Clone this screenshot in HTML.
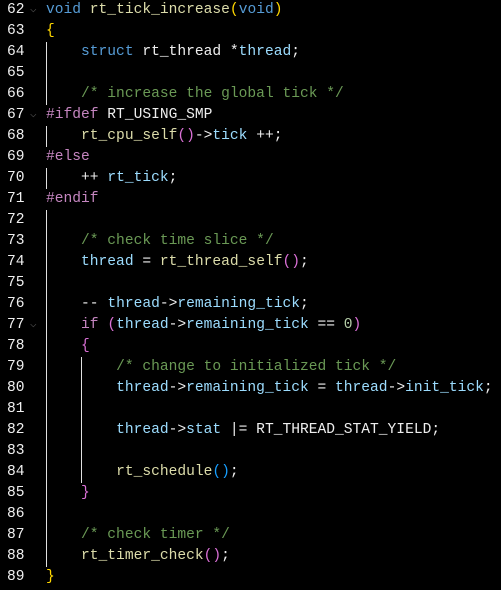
<!DOCTYPE html>
<html><head><meta charset="utf-8"><style>
body{margin:0;background:#000;width:501px;height:590px;overflow:hidden;font-family:"Liberation Mono",monospace;font-size:14.6px;}
.l{position:relative;height:21px;line-height:21px;white-space:pre;}
.n{position:absolute;left:7px;color:#f0f0f0;}
.c{position:absolute;left:46px;color:#eeeeee;}
.k{color:#569cd6}.v{color:#9cdcfe}.f{color:#dcdcaa}.g{color:#6a9955}.p{color:#c586c0}
.y{color:#ffd700}.m{color:#da70d6}.b{color:#179fff}
.fold{position:absolute;left:30px;top:0;color:#555;font-size:11px;}
.gd{position:absolute;width:1px;background:#e0e0e0;}
</style></head><body>
<div class="gd" style="left:46px;top:42px;height:63px"></div>
<div class="gd" style="left:46px;top:126px;height:21px"></div>
<div class="gd" style="left:46px;top:168px;height:21px"></div>
<div class="gd" style="left:46px;top:210px;height:357px"></div>
<div class="gd" style="left:81px;top:357px;height:126px"></div>
<div class="l"><span class="n">62</span><span class="fold">⌵</span><span class="c"><span class="k">void</span> <span class="f">rt_tick_increase</span><span class="y">(</span><span class="k">void</span><span class="y">)</span></span></div>
<div class="l"><span class="n">63</span><span class="c"><span class="y">{</span></span></div>
<div class="l"><span class="n">64</span><span class="c">    <span class="k">struct</span> rt_thread *<span class="v">thread</span>;</span></div>
<div class="l"><span class="n">65</span></div>
<div class="l"><span class="n">66</span><span class="c">    <span class="g">/* increase the global tick */</span></span></div>
<div class="l"><span class="n">67</span><span class="fold">⌵</span><span class="c"><span class="p">#ifdef</span> RT_USING_SMP</span></div>
<div class="l"><span class="n">68</span><span class="c">    <span class="f">rt_cpu_self</span><span class="m">()</span>-&gt;<span class="v">tick</span> ++;</span></div>
<div class="l"><span class="n">69</span><span class="c"><span class="p">#else</span></span></div>
<div class="l"><span class="n">70</span><span class="c">    ++ <span class="v">rt_tick</span>;</span></div>
<div class="l"><span class="n">71</span><span class="c"><span class="p">#endif</span></span></div>
<div class="l"><span class="n">72</span></div>
<div class="l"><span class="n">73</span><span class="c">    <span class="g">/* check time slice */</span></span></div>
<div class="l"><span class="n">74</span><span class="c">    <span class="v">thread</span> = <span class="f">rt_thread_self</span><span class="m">()</span>;</span></div>
<div class="l"><span class="n">75</span></div>
<div class="l"><span class="n">76</span><span class="c">    -- <span class="v">thread</span>-&gt;<span class="v">remaining_tick</span>;</span></div>
<div class="l"><span class="n">77</span><span class="fold">⌵</span><span class="c">    <span class="p">if</span> <span class="m">(</span><span class="v">thread</span>-&gt;<span class="v">remaining_tick</span> == <span style="color:#b5cea8">0</span><span class="m">)</span></span></div>
<div class="l"><span class="n">78</span><span class="c">    <span class="m">{</span></span></div>
<div class="l"><span class="n">79</span><span class="c">        <span class="g">/* change to initialized tick */</span></span></div>
<div class="l"><span class="n">80</span><span class="c">        <span class="v">thread</span>-&gt;<span class="v">remaining_tick</span> = <span class="v">thread</span>-&gt;<span class="v">init_tick</span>;</span></div>
<div class="l"><span class="n">81</span></div>
<div class="l"><span class="n">82</span><span class="c">        <span class="v">thread</span>-&gt;<span class="v">stat</span> |= RT_THREAD_STAT_YIELD;</span></div>
<div class="l"><span class="n">83</span></div>
<div class="l"><span class="n">84</span><span class="c">        <span class="f">rt_schedule</span><span class="b">()</span>;</span></div>
<div class="l"><span class="n">85</span><span class="c">    <span class="m">}</span></span></div>
<div class="l"><span class="n">86</span></div>
<div class="l"><span class="n">87</span><span class="c">    <span class="g">/* check timer */</span></span></div>
<div class="l"><span class="n">88</span><span class="c">    <span class="f">rt_timer_check</span><span class="m">()</span>;</span></div>
<div class="l"><span class="n">89</span><span class="c"><span class="y">}</span></span></div>
</body></html>
